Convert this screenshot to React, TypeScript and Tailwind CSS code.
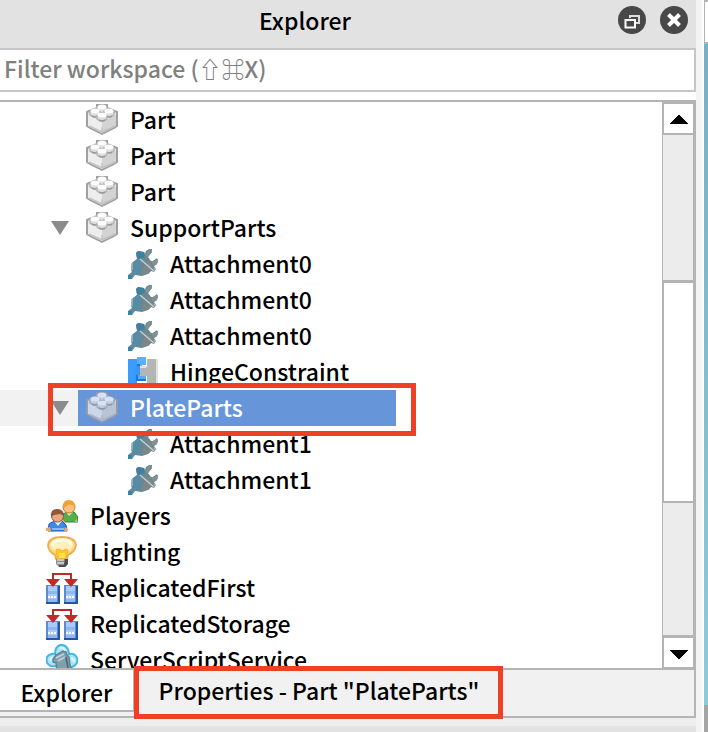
import type { ReactNode } from 'react';
import { clsx } from 'clsx';

type IconName = 'part' | 'attachment' | 'hinge' | 'players' | 'lighting' | 'replicated' | 'server';

interface TreeItem {
  label: string;
  icon: IconName;
  depth: 0 | 1 | 2;
  expanded?: boolean;
  selected?: boolean;
}

const items: TreeItem[] = [
  { label: 'Part', icon: 'part', depth: 1 },
  { label: 'Part', icon: 'part', depth: 1 },
  { label: 'Part', icon: 'part', depth: 1 },
  { label: 'SupportParts', icon: 'part', depth: 1, expanded: true },
  { label: 'Attachment0', icon: 'attachment', depth: 2 },
  { label: 'Attachment0', icon: 'attachment', depth: 2 },
  { label: 'Attachment0', icon: 'attachment', depth: 2 },
  { label: 'HingeConstraint', icon: 'hinge', depth: 2 },
  { label: 'PlateParts', icon: 'part', depth: 1, expanded: true, selected: true },
  { label: 'Attachment1', icon: 'attachment', depth: 2 },
  { label: 'Attachment1', icon: 'attachment', depth: 2 },
  { label: 'Players', icon: 'players', depth: 0 },
  { label: 'Lighting', icon: 'lighting', depth: 0 },
  { label: 'ReplicatedFirst', icon: 'replicated', depth: 0 },
  { label: 'ReplicatedStorage', icon: 'replicated', depth: 0 },
  { label: 'ServerScriptService', icon: 'server', depth: 0 },
];

const indents = ['pl-[38px]', 'pl-[78px]', 'pl-[120px]'];

function Stud({ x, y }: { x: number; y: number }) {
  return (
    <g>
      <path d={`M${x - 5} ${y}v4q5 4 10 0v-4`} fill="#dedede" stroke="#b4b4b4" strokeWidth="1.4" />
      <path d={`M${x - 3} ${y + 5}q3 2 6 0`} fill="none" stroke="#9a9a9a" strokeWidth="1.6" />
      <ellipse cx={x} cy={y} rx="4.500" ry="2.500" fill="#fdfdfd" />
    </g>
  );
}

const icons: Record<IconName, ReactNode> = {
  part: (
    <>
      <path d="M1 8 11 4V1H21V4L31 8V22L28 24 16 30 4 24 1 22Z" fill="#e6e6e6" stroke="#a0a0a0" strokeWidth="2" />
      <path d="M2 11 16 18V29L2 22Z" fill="#ededed" />
      <path d="M16 18 30 11V22L16 29Z" fill="#d3d3d3" />
      <path d="M3 22 16 28V23M29 22 16 28" fill="none" stroke="#c2c2c2" strokeWidth="1.4" />
      <Stud x={16} y={3} />
      <Stud x={9} y={7} />
      <Stud x={23} y={7} />
      <Stud x={16} y={11} />
    </>
  ),
  attachment: (
    <>
      <path d="M0 31V27L4 24 3 21 4 15 9 11 8 5 10 3 16 4 17 6 18 3 21 1 24 1 24 4 20 9 23 13 25 13 29 10 30 13 29 16 26 18 28 21 26 24 23 23 20 26 14 28 7 27 4 31Z" fill="#6b8791" />
      <path d="M4 24 3 21 4 15 9 11 13 14 12 27 7 27Z" fill="#578da4" />
      <path d="M8 5 10 3 16 4 17 8 13 11 9 10Z" fill="#40809e" />
      <path d="M20 3 24 1 24 4 20 9 17 8ZM25 13 30 11 29 16 26 18 23 15Z" fill="#809298" />
      <path d="M20 11 26 18 23 23 20 26 13 26Z" fill="#7c8788" />
      <path d="M12 11 26 23" stroke="#c1d0d4" strokeWidth="1.5" />
      <path d="M4 15V22M26 20 28 22" stroke="#a3bac3" strokeWidth="1.5" />
      <path d="M0 27H4V31H0Z" fill="#3389ad" />
    </>
  ),
  hinge: (
    <>
      <path d="M0 3H9V31H0Z" fill="#3c9bff" />
      <path d="M9 1H18V9H14V14H9Z" fill="#5aafff" />
      <path d="M8 8H12V18H18V25H9V31H7Z" fill="#3796f8" />
      <path d="M9 19H18V25H9Z" fill="#55abff" />
      <path d="M9 9H12M9 19V24H18" fill="none" stroke="#1879dd" strokeWidth="2" />
      <path d="M19 3H28V31H19V20H12V11H19Z" fill="#b5b5b5" />
      <path d="M12 11H18M29 3V31" stroke="#e2e2e2" strokeWidth="2" />
    </>
  ),
  players: (
    <>
      <path d="M16 22 17 14 21 12H28L32 17V22Z" fill="#55ae4b" stroke="#278b37" />
      <path d="M20 12 23 16 27 12" fill="#d9eecb" />
      <path d="M16 19 15 23 20 23M30 19 32 22 29 22" fill="#ebb080" />
      <circle cx="23" cy="7" r="6" fill="#f9c080" stroke="#c77927" />
      <path d="M17 6Q17 0 23 0T29 7Q26 4 22 5L18 8Z" fill="#efa437" />
      <path d="M2 31 3 24 8 21H16L20 25 21 31Z" fill="#4385df" stroke="#175ec7" />
      <path d="M8 21 12 26 16 21" fill="#dbedff" />
      <path d="M0 31V28L4 27 5 31M18 31 19 27 22 29 21 32" fill="#eea66a" />
      <circle cx="11.500" cy="16" r="6" fill="#e9a781" stroke="#925d43" />
      <path d="M5 17Q4 9 11 9T18 16L14 14 8 15Z" fill="#91583b" />
      <path d="M6 29H18" stroke="#88b9f5" strokeWidth="2" />
    </>
  ),
  lighting: (
    <>
      <path d="M10 23 9 19Q2 15 2 9Q3 1 16 1T30 9Q29 16 22 19L21 23Z" fill="#ffdc80" stroke="#eaae59" strokeWidth="1.8" />
      <ellipse cx="16" cy="9" rx="11" ry="7" fill="#fff0bd" />
      <path d="M6 10Q7 4 16 4T25 9" fill="none" stroke="#fffce9" strokeWidth="3" />
      <path d="M11 22 10 14 13 13 16 15 20 13 22 14 20 22Z" fill="#ffc926" stroke="#f5b331" />
      <path d="M13 17H19V22H13Z" fill="#ffe34e" />
      <path d="M10 23H22V28L19 31H13L10 28Z" fill="#8d8d8d" />
      <path d="M11 24H18M11 27H18" stroke="#d9d9d9" strokeWidth="1.5" />
      <path d="M19 23H22V28L19 31H13V29H18Z" fill="#4d4d4d" />
    </>
  ),
  replicated: (
    <>
      {[0, 18].map((x) => (
        <g key={x} transform={`translate(${x} 0)`}>
          <path d="M0 13H14V32H0Z" fill="#5f8ad0" />
          <path d="M2 14H11V29H2Z" fill="#a9cbfa" />
          <path d="M2 19H11V22H2Z" fill="#8fb5f2" />
          <path d="M2 25H11" stroke="#fff" strokeWidth="2" strokeDasharray="2 1" />
          <path d="M2 27H11V30H2Z" fill="#92b6f3" />
          <path d="M12 14H14V32H0V30H12Z" fill="#24559f" />
          <path d="M0 7H14L7 15Z" fill="#c2292b" />
        </g>
      ))}
      <path d="M7 9V2H25V9" fill="none" stroke="#be2929" strokeWidth="2" />
    </>
  ),
  server: (
    <>
      <path d="M5 22Q-1 20 1 13Q4 9 9 10Q9 3 14 1Q22 0 23 10Q29 9 31 14Q33 20 26 23Z" fill="#a9e6fb" stroke="#46b6e3" strokeWidth="2" />
      <path d="M5 17Q3 13 9 14M14 4Q18 3 19 7M25 14Q28 15 28 18" fill="none" stroke="#e0faff" strokeWidth="2" />
      <path d="M7 15 10 11 17 7 20 8 21 11 23 13 24 21 26 27H11L10 19 7 18Z" fill="#7f9fac" stroke="#5e818d" strokeWidth="1.4" />
      <path d="M10 14 18 10M12 17 19 13" stroke="#bdd3da" strokeWidth="1.600" />
      <path d="M20 13 22 24" stroke="#476873" strokeWidth="1.6" />
    </>
  ),
};

function ItemIcon({ name, selected }: { name: IconName; selected?: boolean }) {
  return (
    <svg viewBox="0 0 32 32" className={clsx('ml-2 size-8 shrink-0', selected && 'opacity-75')} aria-hidden="true">
      {icons[name]}
    </svg>
  );
}

function TreeRow({ item }: { item: TreeItem }) {
  const { label, icon, depth, expanded, selected } = item;
  return (
    <li
      role="treeitem"
      aria-level={depth + 1}
      aria-selected={!!selected}
      aria-expanded={expanded}
      className={clsx('relative flex h-9 items-center', !expanded && indents[depth])}
    >
      {expanded && (
        <button
          aria-label={`Collapse ${label}`}
          className={clsx('flex h-9 w-[78px] shrink-0 items-center justify-end pr-[9px]', selected && 'bg-[#f2f2f2]')}
        >
          <svg viewBox="0 0 18 14" className="h-3.5 w-[18px]" aria-hidden="true">
            <path d="M0 0H18L9 14Z" fill="#8c8c8c" />
          </svg>
        </button>
      )}
      <span
        className={clsx(
          'flex h-9 items-center whitespace-nowrap',
          depth === 2 ? 'gap-2.5' : 'gap-3',
          selected && 'w-[318px] bg-[#6795da] text-white',
        )}
      >
        <ItemIcon name={icon} selected={selected} />
        <span className="pb-0.5">{label}</span>
      </span>
      {selected && (
        <span className="pointer-events-none absolute -top-[7px] left-12 z-10 h-[53px] w-[368px] border-5 border-[#ee4025]" />
      )}
    </li>
  );
}

function ScrollBar() {
  return (
    <div className="flex w-[34px] shrink-0 flex-col border-r-3 border-[#b4b4b4]">
      <button aria-label="Scroll up" className="flex h-[33px] shrink-0 items-center justify-center border-y-2 border-l-2 border-[#b4b4b4] bg-white">
        <svg viewBox="0 0 18 10" className="h-2.5 w-[18px]" shapeRendering="crispEdges" aria-hidden="true">
          <path d="M9 0 18 10H0Z" />
        </svg>
      </button>
      <div className="grow-[146] basis-0 border-l border-[#b4b4b4] bg-[#ececec]" />
      <div className="grow-[221] basis-0 border-t-3 border-b-2 border-l-2 border-[#b4b4b4] bg-white" />
      <div className="grow-[133] basis-0 border-l border-[#b4b4b4] bg-[#ececec]" />
      <button aria-label="Scroll down" className="flex h-[33px] shrink-0 items-center justify-center border-t-3 border-b border-l-2 border-[#b4b4b4] bg-white pt-1">
        <svg viewBox="0 0 18 10" className="h-2.5 w-[18px]" shapeRendering="crispEdges" aria-hidden="true">
          <path d="M0 0H18L9 10Z" />
        </svg>
      </button>
    </div>
  );
}

function TitleBar() {
  return (
    <header className="flex h-12 shrink-0 items-center bg-[#e2e2e2] pr-2">
      <h1 className="min-w-0 flex-1 pr-2 pb-2 text-center">Explorer</h1>
      <div className="flex gap-3.5 pb-2">
        <button aria-label="Float panel">
          <svg viewBox="0 0 28 28" className="size-7" aria-hidden="true">
            <circle cx="14" cy="14" r="14" fill="#484848" />
            <path d="M12 12V10H21V17H18" fill="none" stroke="#ddd" strokeWidth="2" />
            <path d="M7.500 14H17V21.500H7.500Z" fill="#484848" stroke="#fff" strokeWidth="2" />
          </svg>
        </button>
        <button aria-label="Close panel">
          <svg viewBox="0 0 28 28" className="size-7" aria-hidden="true">
            <circle cx="14" cy="14" r="14" fill="#484848" />
            <path d="M8.500 8.500 19.500 19.500M19.500 8.500 8.500 19.500" stroke="#fff" strokeWidth="4" />
          </svg>
        </button>
      </div>
    </header>
  );
}

export default function App() {
  return (
    <div className="flex h-screen overflow-hidden bg-[#f4f4f4] font-['Noto_Sans_CJK_SC',sans-serif] text-[23px] leading-8 font-medium text-black">
      <main className="flex min-w-0 flex-1 flex-col bg-white">
        <TitleBar />
        <input
          type="text"
          aria-label="Filter workspace"
          placeholder="Filter workspace (⇧⌘X)"
          className="h-11 w-full shrink-0 border-y-2 border-r-2 border-[#c6c6c6] bg-white pb-1 pl-1 placeholder:text-[#808080]"
        />
        <div className="mt-2 flex min-h-0 flex-1 border-t-2 border-[#b4b4b4]">
          <ul role="tree" aria-label="Workspace" className="min-w-0 flex-1 overflow-hidden">
            {items.map((item, i) => (
              <TreeRow key={i} item={item} />
            ))}
          </ul>
          <ScrollBar />
        </div>
        <div role="tablist" className="flex h-[50px] shrink-0 items-start border-y-2 border-r-2 border-[#b4b4b4] bg-[#f1f1f1]">
          <button role="tab" aria-selected="true" className="h-[42px] w-[135px] shrink-0 border-r-2 border-b-2 border-[#b4b4b4] bg-white pt-1">
            Explorer
          </button>
          <button role="tab" aria-selected="false" className="relative h-[42px] w-[368px] pb-0.5 whitespace-nowrap">
            Properties - Part "PlateParts"
            <span className="pointer-events-none absolute -top-1 -left-px z-10 h-[53px] w-[369px] border-5 border-[#ee4025]" />
          </button>
        </div>
        <div className="h-3.5 shrink-0 border-b-6 border-[#e2e2e2] bg-[#eee]" />
      </main>
      <div className="w-2 shrink-0 border-r-2 border-white" />
      {/* Edge of the viewport next to the docked panel */}
      <div className="flex w-1 shrink-0 flex-col">
        <div className="h-11 border-y-2 border-l border-[#b4b4b4] bg-white" />
        <div className="flex-1 bg-linear-to-b from-[#78afc7] to-[#8ecbd9]" />
        <div className="h-[27px] bg-[#a5a5a5]" />
      </div>
    </div>
  );
}
